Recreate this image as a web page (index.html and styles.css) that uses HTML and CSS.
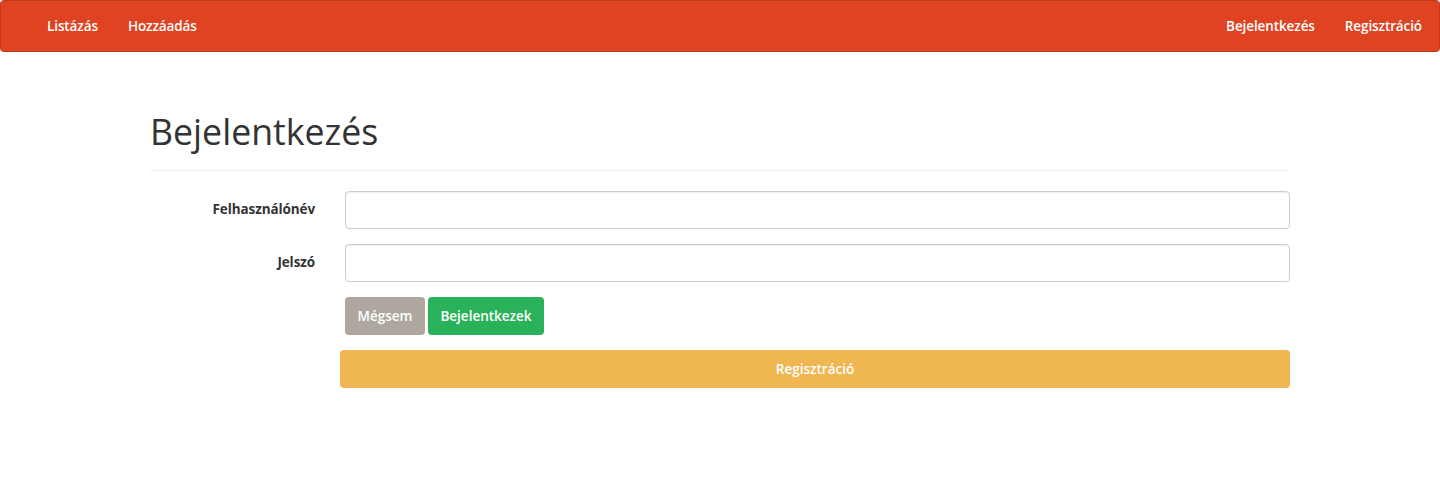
FILE: index.html
```html
<!DOCTYPE html>
<html lang="hu">
<head>
<meta charset="utf-8">
<title>Bejelentkezés</title>
<link rel="stylesheet" href="styles.css">
</head>
<body>
<nav class="navbar">
  <ul class="nav">
    <li><a href="#">Listázás</a></li>
    <li><a href="#">Hozzáadás</a></li>
  </ul>
  <ul class="nav nav-right">
    <li><a href="#">Bejelentkezés</a></li>
    <li><a href="#">Regisztráció</a></li>
  </ul>
</nav>
<main class="container">
  <div class="page-header">
    <h1>Bejelentkezés</h1>
  </div>
  <form class="form">
    <div class="form-group">
      <label class="control-label" for="user">Felhasználónév</label>
      <div class="field"><input id="user" type="text" class="form-control"></div>
    </div>
    <div class="form-group">
      <label class="control-label" for="pass">Jelszó</label>
      <div class="field"><input id="pass" type="password" class="form-control"></div>
    </div>
    <div class="form-group">
      <div class="spacer"></div>
      <div class="field buttons">
        <button type="button" class="btn btn-muted">Mégsem</button>
        <button type="submit" class="btn btn-success">Bejelentkezek</button>
      </div>
    </div>
    <div class="register-row">
      <button type="button" class="btn btn-warning btn-block">Regisztráció</button>
    </div>
  </form>
</main>
</body>
</html>
```
FILE: styles.css
```css
* { box-sizing: border-box; }
html, body { margin: 0; padding: 0; }
body {
  font-family: "Open Sans", "Noto Sans", sans-serif;
  font-size: 14px;
  line-height: 1.42857;
  color: #333;
  background: #fff;
}

.navbar {
  display: flex;
  justify-content: space-between;
  align-items: stretch;
  height: 52px;
  background: #e04322;
  border: 1px solid #c1391b;
  border-radius: 4px;
  padding: 0 2px 0 31px;
}
.nav {
  list-style: none;
  margin: 0;
  padding: 0;
  display: flex;
}
.nav a {
  display: block;
  padding: 15px 15px;
  line-height: 20px;
  color: #fff;
  text-decoration: none;
  font-size: 13.5px;
  font-weight: 600;
  letter-spacing: -0.1px;
}

.container {
  width: 1170px;
  margin: 0 auto;
  padding: 0 15px;
}
.page-header {
  margin-top: 59px;
  padding-bottom: 19px;
  border-bottom: 1px solid #eee;
}
.page-header h1 {
  margin: 0;
  font-size: 35.7px;
  font-weight: 400;
  line-height: 40px;
  color: #333;
  letter-spacing: 0;
}

.form { margin-top: 20px; }
.form-group {
  display: flex;
  margin: 0 -15px 15px;
}
.control-label, .spacer {
  width: 195px;
  flex: none;
  padding: 9px 15px 0;
  text-align: right;
  font-weight: 700;
  font-size: 13.5px;
  letter-spacing: -0.1px;
}
.field {
  flex: 1;
  padding: 0 15px;
}
.form-control {
  display: block;
  width: 100%;
  height: 38px;
  padding: 8px 12px;
  font: inherit;
  border: 1px solid #ccc;
  border-radius: 4px;
  box-shadow: inset 0 1px 1px rgba(0,0,0,0.075);
  background: #fff;
}
.buttons {
  display: flex;
  gap: 3px;
}
.btn {
  height: 38px;
  padding: 0 13px;
  border: 1px solid transparent;
  border-radius: 4px;
  color: #fff;
  font-family: inherit;
  font-size: 13.5px;
  font-weight: 600;
  cursor: pointer;
}
.btn-muted { background: #aea79f; width: 80px; padding: 0; }
.btn-success { background: #29b259; width: 116px; padding: 0; }
.btn-warning { background: #efb652; }
.register-row {
  margin-top: 15px;
  padding-left: 190px;
}
.btn-block {
  display: block;
  width: 100%;
  height: 38px;
}
```
